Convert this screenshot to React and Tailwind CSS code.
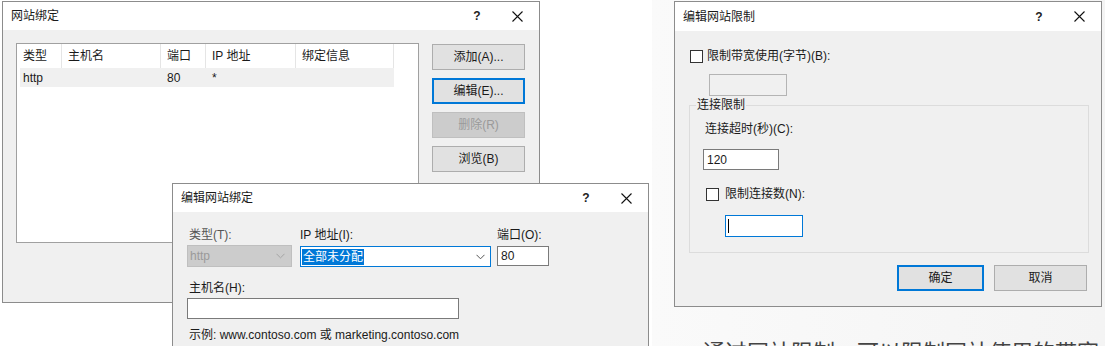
import React from "react";

const font = "font-['Liberation_Sans','Noto_Sans_CJK_SC',sans-serif]";

// ───── SMALL PARTS ─────
const CloseIcon = () => (
  <svg width="11" height="11" viewBox="0 0 11 11">
    <path d="M0.5 0.5 L10.5 10.5 M10.5 0.5 L0.5 10.5" stroke="#111" strokeWidth="1.1" fill="none" />
  </svg>
);

const Chevron = ({ color = "#555" }) => (
  <svg width="9" height="6" viewBox="0 0 9 6">
    <path d="M0.5 0.8 L4.5 4.8 L8.5 0.8" stroke={color} strokeWidth="1" fill="none" />
  </svg>
);

const TitleBar = ({ title, h = "h-[28px]" }) => (
  <div className={`${h} bg-white flex items-center pl-[8px] shrink-0`}>
    <span className="text-[12px] text-[#1a1a1a]">{title}</span>
    <div className="ml-auto flex items-center pr-[2px]">
      <span className="w-[40px] text-center text-[12px] font-bold text-[#222]">?</span>
      <span className="w-[40px] flex justify-center">
        <CloseIcon />
      </span>
    </div>
  </div>
);

const Button = ({ children, focused, disabled, w = "w-[93px]" }) => (
  <div
    className={`${w} h-[26px] flex items-center justify-center text-[12px] border ${
      disabled
        ? "bg-[#cccccc] border-[#bfbfbf] text-[#9a9a9a]"
        : focused
        ? "bg-[#e1e1e1] border-[#0078d7] shadow-[inset_0_0_0_1px_#0078d7] text-[#1a1a1a]"
        : "bg-[#e1e1e1] border-[#adadad] text-[#1a1a1a]"
    }`}
  >
    {children}
  </div>
);

const Checkbox = () => (
  <div className="w-[13px] h-[13px] border border-[#333] bg-white shrink-0" />
);

// ───── DIALOGS ─────
const BindingsDialog = () => (
  <div className="absolute left-[2px] top-[1px] w-[538px] h-[302px] border border-[#8c8c8c] bg-[#f0f0f0] flex flex-col">
    <TitleBar title="网站绑定" />
    <div className="flex pt-[13px] pl-[13px]">
      {/* LIST */}
      <div className="w-[403px] h-[200px] border border-[#a0a0a0] bg-white text-[12px] text-[#1a1a1a]">
        <div className="h-[24px] flex items-center">
          <div className="w-[45px] pl-[6px] border-r border-[#e5e5e5] leading-[24px]">类型</div>
          <div className="w-[99px] pl-[6px] border-r border-[#e5e5e5] leading-[24px]">主机名</div>
          <div className="w-[45px] pl-[6px] border-r border-[#e5e5e5] leading-[24px]">端口</div>
          <div className="w-[90px] pl-[6px] border-r border-[#e5e5e5] leading-[24px]">IP 地址</div>
          <div className="w-[98px] pl-[6px] border-r border-[#e5e5e5] leading-[24px]">绑定信息</div>
        </div>
        <div className="ml-[3px] w-[374px] h-[19px] bg-[#f0f0f0] flex items-center">
          <div className="w-[42px] pl-[3px]">http</div>
          <div className="w-[99px]" />
          <div className="w-[45px] pl-[6px]">80</div>
          <div className="w-[90px] pl-[6px]">*</div>
        </div>
      </div>

      {/* BUTTONS */}
      <div className="ml-[13px] mt-[1px] flex flex-col gap-[8px]">
        <Button>添加(A)...</Button>
        <Button focused>编辑(E)...</Button>
        <Button disabled>删除(R)</Button>
        <Button>浏览(B)</Button>
      </div>
    </div>
  </div>
);

const EditBindingDialog = () => (
  <div className="absolute left-[172px] top-[183px] w-[477px] h-[180px] border border-[#8c8c8c] bg-[#f0f0f0] flex flex-col text-[12px] text-[#1a1a1a]">
    <TitleBar title="编辑网站绑定" />
    <div className="pl-[14px] pt-[15px]">
      <div className="flex">
        <div className="w-[105px]">
          <div className="h-[16px] leading-[16px] pl-[2px] text-[#555]">类型(T):</div>
          <div className="mt-[2px] h-[22px] bg-[#cccccc] border border-[#bfbfbf] text-[#9a9a9a] flex items-center pl-[2px] pr-[6px]">
            <span>http</span>
            <span className="ml-auto flex">
              <Chevron color="#a5a5a5" />
            </span>
          </div>
        </div>
        <div className="ml-[8px] w-[191px]">
          <div className="h-[16px] leading-[16px]">IP 地址(I):</div>
          <div className="mt-[3px] h-[21px] bg-white border border-[#0078d7] flex items-center pl-[1px] pr-[5px]">
            <span className="bg-[#0078d7] text-white leading-[16px] px-[1px]">全部未分配</span>
            <span className="ml-auto flex">
              <Chevron />
            </span>
          </div>
        </div>
        <div className="ml-[6px] w-[52px]">
          <div className="h-[16px] leading-[16px]">端口(O):</div>
          <div className="mt-[3px] h-[20px] bg-white border border-[#7a7a7a] flex items-center pl-[3px]">80</div>
        </div>
      </div>

      <div className="mt-[13px] h-[16px] leading-[16px] pl-[2px]">主机名(H):</div>
      <div className="mt-[2px] w-[272px] h-[21px] bg-white border border-[#7a7a7a]" />
      <div className="mt-[8px] h-[16px] leading-[16px] pl-[2px]">
        示例: www.contoso.com 或 marketing.contoso.com
      </div>
    </div>
  </div>
);

const LimitsDialog = () => (
  <div className="absolute left-[674px] top-[1px] w-[428px] h-[306px] border border-[#8c8c8c] bg-[#f0f0f0] flex flex-col text-[12px] text-[#1a1a1a]">
    <TitleBar title="编辑网站限制" h="h-[29px]" />
    <div className="pt-[17px]">
      <div className="pl-[15px] h-[16px] flex items-center gap-[4px]">
        <Checkbox />
        <span className="leading-[16px]">限制带宽使用(字节)(B):</span>
      </div>
      <div className="ml-[34px] mt-[10px] w-[78px] h-[22px] border border-[#b4b4b4] bg-[#f0f0f0]" />

      {/* GROUP */}
      <fieldset className="ml-[14px] mt-[1px] w-[400px] h-[156px] border border-[#dcdcdc]">
        <legend className="ml-[6px] px-[1px] leading-[16px]">连接限制</legend>
        <div className="pl-[13px]">
          <div className="mt-[8px] pl-[2px] leading-[16px]">连接超时(秒)(C):</div>
          <div className="mt-[12px] w-[76px] h-[21px] bg-white border border-[#7a7a7a] flex items-center pl-[3px]">120</div>
          <div className="mt-[17px] ml-[3px] h-[14px] flex items-center gap-[6px]">
            <Checkbox />
            <span className="leading-[16px]">限制连接数(N):</span>
          </div>
          <div className="mt-[14px] ml-[22px] w-[78px] h-[22px] bg-white border border-[#0078d7] flex items-center pl-[2px]">
            <span className="w-[1px] h-[14px] bg-black" />
          </div>
        </div>
      </fieldset>

      <div className="mt-[12px] pr-[14px] flex justify-end gap-[10px]">
        <Button focused w="w-[87px]">确定</Button>
        <Button>取消</Button>
      </div>
    </div>
  </div>
);

// ───── PAGE ─────
export default function App() {
  return (
    <div className={`${font} relative w-[1105px] h-[346px] overflow-hidden bg-white flex`}>
      <div className="w-[652px] h-full" />
      <div className="flex-1 h-full bg-gradient-to-r from-[#fafafa] to-[#f4f4f4] flex flex-col">
        <div className="mt-auto pl-[51px] h-[7px] overflow-visible">
          <p className="text-[22px] leading-none whitespace-nowrap text-[#444] font-['Noto_Sans_CJK_SC',sans-serif]">
            通过网站限制，可以限制网站使用的带宽
          </p>
        </div>
      </div>

      <BindingsDialog />
      <EditBindingDialog />
      <LimitsDialog />
    </div>
  );
}
